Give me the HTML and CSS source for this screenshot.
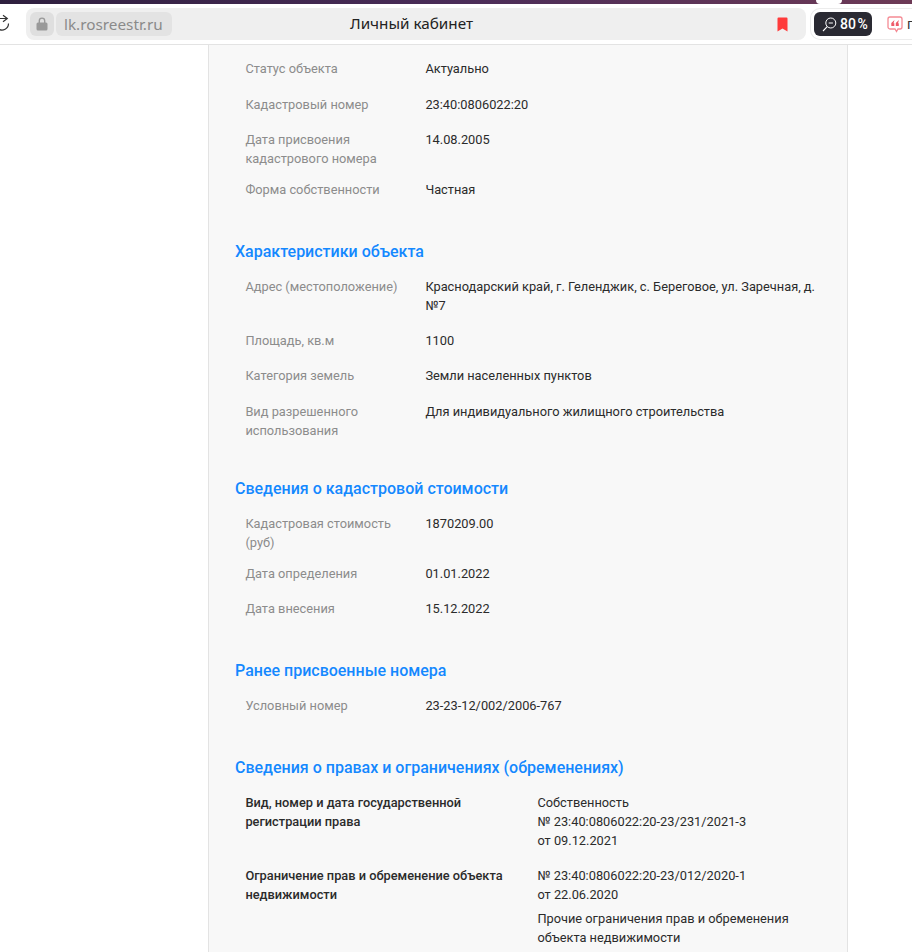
FILE: index.html
```html
<!DOCTYPE html>
<html lang="ru">
<head>
<meta charset="utf-8">
<title>Личный кабинет</title>
<link rel="stylesheet" href="styles.css">
</head>
<body>
<div class="tabstrip"><span class="tab-notch"></span></div>
<header class="toolbar">
  <svg class="reload" width="12" height="20" viewBox="0 0 12 20"><path d="M8.500 9.500A6.500 6.500 0 0 1-1.500 15M-4 4.500H7M3 1.300L7.300 4.500 3 7.700" fill="none" stroke="#333" stroke-width="1.200"/></svg>
  <div class="omnibox">
    <span class="lock"><svg width="12" height="14" viewBox="0 0 12 14"><rect x=".5" y="5.500" width="11" height="8" rx="1.500" fill="#999"/><path d="M3.300 6V3.800a2.700 2.700 0 0 1 5.400 0V6" fill="none" stroke="#999" stroke-width="1.400"/></svg></span>
    <span class="domain">lk.rosreestr.ru</span>
    <span class="page-title">Личный кабинет</span>
    <svg class="bookmark" width="11" height="15" viewBox="0 0 11 15"><path d="M.5 1.500a1 1 0 0 1 1-1h8a1 1 0 0 1 1 1v13l-5-3-5 3z" fill="#ff3b3b"/></svg>
  </div>
  <div class="extensions">
    <div class="zoom-badge">
      <svg width="15" height="15" viewBox="0 0 15 15"><circle cx="8.800" cy="6" r="5" fill="none" stroke="#fff" stroke-width="1"/><path d="M6.700 6h4.200M5.200 9.700L1 14" stroke="#fff" stroke-width="1.100" fill="none"/></svg>
      <span class="zoom-value">80 %</span>
    </div>
    <svg class="quote" width="16" height="17" viewBox="0 0 16 17"><path d="M3 1h10a2 2 0 0 1 2 2v8a2 2 0 0 1-2 2h-2L9.500 15.500 8 13H3a2 2 0 0 1-2-2V3a2 2 0 0 1 2-2z" fill="#fff" stroke="#f58a94" stroke-width="1.300"/><path d="M7.500 4L4.300 7v3h3V7.300H6.500zM12 4L8.800 7v3h3V7.300H11z" fill="#ee5a68"/></svg>
    <span class="ext-text">п</span>
  </div>
</header>
<main class="card">
  <section class="group">
    <div class="row"><div class="label">Статус объекта</div><div class="value">Актуально</div></div>
    <div class="row"><div class="label">Кадастровый номер</div><div class="value">23:40:0806022:20</div></div>
    <div class="row tight"><div class="label">Дата присвоения кадастрового номера</div><div class="value">14.08.2005</div></div>
    <div class="row"><div class="label">Форма собственности</div><div class="value">Частная</div></div>
  </section>
  <section class="group nudge">
    <h2>Характеристики объекта</h2>
    <div class="row"><div class="label">Адрес (местоположение)</div><div class="value">Краснодарский край, г. Геленджик, с. Береговое, ул. Заречная, д. №7</div></div>
    <div class="row"><div class="label">Площадь, кв.м</div><div class="value">1100</div></div>
    <div class="row"><div class="label">Категория земель</div><div class="value">Земли населенных пунктов</div></div>
    <div class="row tight"><div class="label">Вид разрешенного использования</div><div class="value">Для индивидуального жилищного строительства</div></div>
  </section>
  <section class="group">
    <h2>Сведения о кадастровой стоимости</h2>
    <div class="row tight"><div class="label">Кадастровая стоимость (руб)</div><div class="value">1870209.00</div></div>
    <div class="row"><div class="label">Дата определения</div><div class="value">01.01.2022</div></div>
    <div class="row"><div class="label">Дата внесения</div><div class="value">15.12.2022</div></div>
  </section>
  <section class="group">
    <h2>Ранее присвоенные номера</h2>
    <div class="row"><div class="label">Условный номер</div><div class="value">23-23-12/002/2006-767</div></div>
  </section>
  <section class="group">
    <h2>Сведения о правах и ограничениях (обременениях)</h2>
    <div class="rights">
      <div class="rights-label">Вид, номер и дата государственной регистрации права</div>
      <div class="rights-value"><p>Собственность<br>№ 23:40:0806022:20-23/231/2021-3<br>от 09.12.2021</p></div>
      <div class="rights-label">Ограничение прав и обременение объекта недвижимости</div>
      <div class="rights-value"><p>№ 23:40:0806022:20-23/012/2020-1<br>от 22.06.2020</p><p>Прочие ограничения прав и обременения объекта недвижимости</p></div>
    </div>
  </section>
</main>
</body>
</html>
```
FILE: styles.css
```css
* { box-sizing: border-box; }
html, body { margin: 0; height: 952px; overflow: hidden; }
body { background: #fff; font-family: Roboto, sans-serif; font-size: 12.8px; line-height: 19px; color: #2b2b2b; }

.tabstrip { height: 4px; background: linear-gradient(90deg, #2e1f3e 0%, #4a2c58 50%, #6d3a56 100%); display: flex; justify-content: flex-end; }
.tab-notch { width: 26px; height: 4px; margin-right: 70px; background: #fff; border-radius: 0 0 8px 8px; }

.toolbar { height: 41px; background: #fff; border-bottom: 1px solid #e3e3e3; display: flex; align-items: center; gap: 4px; }
.reload { flex: none; margin-right: 10px; }
.omnibox { flex: none; width: 780px; height: 32px; background: #efefef; border-radius: 8px; display: flex; align-items: center; padding: 0 18px 0 4px; position: relative; }
.lock { width: 24px; height: 24px; background: #dfdfdf; border-radius: 6px; display: flex; align-items: center; justify-content: center; }
.domain { margin-left: 2px; height: 24px; padding: 0 9px 0 8px; background: #e3e3e3; border-radius: 6px; line-height: 24px; color: #8a8a8a; font-family: "Noto Sans", sans-serif; font-size: 15.300px; }
.page-title { position: absolute; left: 324px; top: 0; line-height: 31px; color: #222; font-family: "Noto Sans", sans-serif; font-size: 15.250px; }
.bookmark { margin-left: auto; }

.extensions { flex: none; width: 102px; height: 32px; border: 1px solid #ececec; border-right: 0; border-radius: 10px 0 0 10px; display: flex; align-items: center; padding-left: 3px; gap: 15px; overflow: hidden; }
.zoom-badge { flex: none; width: 58px; height: 24px; background: #2a2a33; color: #fff; border-radius: 6px; display: flex; align-items: center; gap: 3px; padding-left: 8px; }
.zoom-value { font-size: 14px; font-weight: 500; word-spacing: -2px; }
.quote { flex: none; }
.ext-text { font-size: 14px; margin-left: -11px; color: #333; }

.card { width: 640px; height: 907px; margin-left: 208px; background: #f8f8f8; border-left: 1px solid #e3e3e3; border-right: 1px solid #e3e3e3; padding: 14.400px 26px 0; overflow: hidden; }
.group.nudge { padding-bottom: .4px; }
h2 { margin: 0 0 12.600px; padding-top: 25px; font-size: 16px; line-height: 24px; font-weight: 500; color: #1488ff; }
.row { display: grid; grid-template-columns: 180px 1fr; padding-left: 10.400px; margin-bottom: 16.300px; }
.row.tight { margin-bottom: 12px; }
.label { color: #8c8c8c; padding-right: 20px; }
.value { color: #2b2b2b; }

.rights { display: grid; grid-template-columns: 292px 1fr; padding: .2px 0 0 10.400px; }
.rights-label { font-weight: 500; color: #2b2b2b; padding-right: 20px; }
.rights-value { padding-bottom: 16px; width: 270px; }
.rights-value p { margin: 0 0 5px; }
.rights-value p:last-child { margin-bottom: 0; }
```
